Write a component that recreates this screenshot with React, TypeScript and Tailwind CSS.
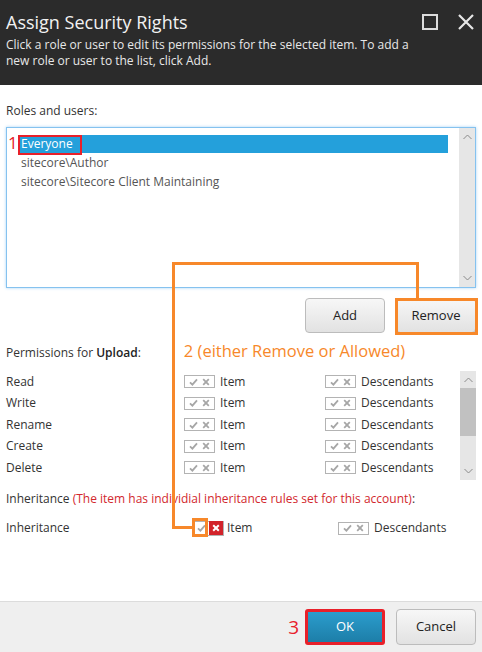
import React from 'react';

function Chevron({ up }: { up?: boolean }) {
  return (
    <svg width="9" height="6" viewBox="0 0 9 6" className="text-[#8a8a8a]">
      <path d={up ? 'M0.5 5 L4.5 1 L8.5 5' : 'M0.5 1 L4.5 5 L8.5 1'} fill="none" stroke="currentColor" strokeWidth="1" />
    </svg>
  );
}

function Check({ color = '#a6a6a6' }: { color?: string }) {
  return (
    <svg width="9" height="8" viewBox="0 0 9 8">
      <path d="M1 4.3 L3.4 6.6 L8 1.4" fill="none" stroke={color} strokeWidth="1.8" />
    </svg>
  );
}

function Cross({ color = '#a6a6a6', w = 1.8 }: { color?: string; w?: number }) {
  return (
    <svg width="8" height="8" viewBox="0 0 8 8">
      <path d="M1.2 1.2 L6.8 6.8 M6.8 1.2 L1.2 6.8" fill="none" stroke={color} strokeWidth={w} />
    </svg>
  );
}

function Toggle() {
  return (
    <div className="w-[31px] h-[13px] border border-[#b3b3b3] bg-white flex items-center justify-between px-[4px]">
      <Check />
      <Cross />
    </div>
  );
}

function PermRow({ label }: { label: string }) {
  return (
    <div className="h-[21.5px] flex items-center">
      <div className="w-[178px]">{label}</div>
      <Toggle />
      <span className="ml-[5px] w-[105px]">Item</span>
      <Toggle />
      <span className="ml-[5px]">Descendants</span>
    </div>
  );
}

function Scrollbar({ thumb }: { thumb?: boolean }) {
  return (
    <div className="w-[16px] self-stretch bg-[#e6e6e6] flex flex-col items-center justify-between py-[6px]">
      <Chevron up />
      {thumb && <div className="w-full h-[48px] bg-[#c1c1c1] mb-auto mt-[5px]" />}
      <Chevron />
    </div>
  );
}

export default function App() {
  return (
    <div className="relative w-[482px] h-[652px] bg-white flex flex-col text-[12px] text-[#333] overflow-hidden" style={{ fontFamily: '"Open Sans", sans-serif' }}>
      {/* header */}
      <div className="h-[85px] bg-[#2b2b2b] text-white px-[6px] pt-[10px] relative">
        <div className="text-[18px] leading-[24px] text-[#f2f2f2]">Assign Security Rights</div>
        <div className="text-[12px] leading-[16px] mt-[3px] text-[#e8e8e8] w-[420px]">
          Click a role or user to edit its permissions for the selected item. To add a new role or user to the list, click Add.
        </div>
        <div className="absolute left-[422px] top-[14px] w-[16px] h-[16px] border-2 border-[#dcdcdc]" />
        <svg className="absolute left-[457px] top-[13px]" width="18" height="18" viewBox="0 0 18 18">
          <path d="M2 2 L16 16 M16 2 L2 16" stroke="#e6e6e6" strokeWidth="2.2" />
        </svg>
      </div>

      {/* body */}
      <div className="flex-1 px-[6px] pt-[18px]">
        <div className="leading-[16px]">Roles and users:</div>
        <div className="mt-[8px] h-[161px] border border-[#85c2ef] shadow-[0_0_3px_#a9d5f6] flex">
          <div className="flex-1 pl-[13px] pr-[11px] pt-[7px] text-[#555]">
            <div className="h-[18px] leading-[18px] bg-[#24a0db] text-white pl-[1px]">Everyone</div>
            <div className="h-[19px] leading-[19px] pl-[1px]">sitecore\Author</div>
            <div className="h-[19px] leading-[19px] pl-[1px]">sitecore\Sitecore Client Maintaining</div>
          </div>
          <Scrollbar />
        </div>

        <div className="mt-[10px] flex justify-end gap-[11px] text-[13px] text-[#222]">
          <button className="w-[80px] h-[35px] rounded-[4px] border border-[#bcbcbc] bg-gradient-to-b from-[#f7f7f7] to-[#e2e2e2]">Add</button>
          <button className="w-[80px] h-[35px] rounded-[4px] border border-[#bcbcbc] bg-gradient-to-b from-[#f7f7f7] to-[#e2e2e2]">Remove</button>
        </div>

        <div className="mt-[12px] flex items-center h-[16px]">
          <span>Permissions for <b className="font-semibold text-[#222]">Upload</b>:</span>
          <span className="ml-[43px] text-[16.5px] text-[#f7882a] -mt-[4px]">2 (either Remove or Allowed)</span>
        </div>

        <div className="mt-[10px] h-[109px] flex">
          <div className="flex-1 text-[#333]">
            <PermRow label="Read" />
            <PermRow label="Write" />
            <PermRow label="Rename" />
            <PermRow label="Create" />
            <PermRow label="Delete" />
          </div>
          <Scrollbar thumb />
        </div>

        <div className="mt-[11px] leading-[16px]">
          Inheritance <span className="text-[#d2282e]">(The item has individial inheritance rules set for this account)</span>:
        </div>

        <div className="mt-[13px] h-[16px] flex items-center">
          <div className="w-[186px]">Inheritance</div>
          <div className="flex items-center h-[15px] border border-[#b3b3b3] bg-white w-[32px]">
            <div className="w-[16px] flex justify-center"><Check /></div>
            <div className="w-[14px] h-[14px] bg-[#d2232a] flex items-center justify-center">
              <Cross color="#ffffff" w={2} />
            </div>
          </div>
          <span className="ml-[3px] w-[111px]">Item</span>
          <Toggle />
          <span className="ml-[5px]">Descendants</span>
        </div>
      </div>

      {/* footer */}
      <div className="h-[51px] bg-[#efefef] border-t border-[#dcdcdc] flex items-center justify-end gap-[11px] pr-[6px] text-[13px]">
        <span className="text-[19px] text-[#e8202a] mr-[-5px]">3</span>
        <button className="w-[80px] h-[36px] rounded-[3px] bg-gradient-to-b from-[#2b9dcd] to-[#1d7ea8] text-white border-[3px] border-[#e8202a]">OK</button>
        <button className="w-[80px] h-[36px] rounded-[4px] border border-[#bcbcbc] bg-gradient-to-b from-[#f7f7f7] to-[#e2e2e2] text-[#222]">Cancel</button>
      </div>

      {/* annotations */}
      <span className="absolute left-[8px] top-[133px] text-[17px] leading-[20px] text-[#e8202a]">1</span>
      <div className="absolute left-[18px] top-[135px] w-[64px] h-[20px] border-2 border-[#e8202a]" />
      <div className="absolute left-[395px] top-[298px] w-[83px] h-[37px] border-[3px] border-[#f7882a]" />
      <div className="absolute left-[172px] top-[262px] w-[247px] h-[3px] bg-[#f7882a]" />
      <div className="absolute left-[416px] top-[262px] w-[3px] h-[37px] bg-[#f7882a]" />
      <div className="absolute left-[172px] top-[262px] w-[3px] h-[267px] bg-[#f7882a]" />
      <div className="absolute left-[172px] top-[526px] w-[22px] h-[3px] bg-[#f7882a]" />
      <div className="absolute left-[192px] top-[518px] w-[16px] h-[19px] border-[3px] border-[#f7882a]" />
    </div>
  );
}
